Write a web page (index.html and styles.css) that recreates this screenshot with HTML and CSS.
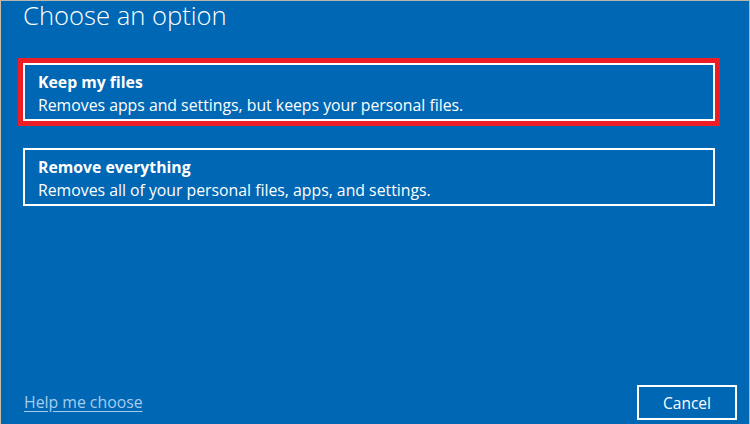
FILE: index.html
```html
<!DOCTYPE html>
<html lang="en">
<head>
<meta charset="utf-8">
<title>Choose an option</title>
<link rel="stylesheet" href="styles.css">
</head>
<body>
<div class="screen">
  <h1 class="title">Choose an option</h1>
  <div class="options">
    <div class="option option-selected">
      <div class="option-name">Keep my files</div>
      <div class="option-desc">Removes apps and settings, but keeps your personal files.</div>
    </div>
    <div class="option">
      <div class="option-name">Remove everything</div>
      <div class="option-desc">Removes all of your personal files, apps, and settings.</div>
    </div>
  </div>
  <div class="footer">
    <a class="help" href="#">Help me choose</a>
    <button class="cancel" type="button">Cancel</button>
  </div>
</div>
</body>
</html>
```

FILE: styles.css
```css
html, body {
  margin: 0;
  padding: 0;
  height: 100%;
}
body {
  background: #0067b4;
  font-family: "Open Sans", "Noto Sans", sans-serif;
  color: #ffffff;
  overflow: hidden;
}
.screen {
  box-sizing: border-box;
  width: 750px;
  height: 424px;
  display: flex;
  flex-direction: column;
  padding: 0 12px 4px 22px;
  border-left: 1px solid #c9bfa8;
  border-top: 1px solid #b9b4ac;
  border-right: 1px solid #9fbbd6;
}
.title {
  margin: 0;
  font-weight: 300;
  font-size: 25.6px;
  line-height: 30px;
}
.options {
  display: flex;
  flex-direction: column;
  gap: 27px;
  margin-top: 32px;
  width: 692px;
}
.option {
  box-sizing: border-box;
  height: 58px;
  border: 2px solid #ffffff;
  padding: 6px 13px 0 13px;
}
.option-selected {
  outline: 5px solid #ee1c25;
}
.option-name {
  font-weight: 700;
  font-size: 15.8px;
  line-height: 23px;
}
.option-desc {
  font-size: 15.8px;
  line-height: 23px;
}
.footer {
  margin-top: auto;
  display: flex;
  justify-content: space-between;
  align-items: flex-end;
}
.help {
  color: #a6cdf0;
  font-size: 15.8px;
  line-height: 20px;
  margin-bottom: 8px;
  margin-left: 1px;
  text-decoration: underline;
  text-underline-offset: 3px;
}
.cancel {
  box-sizing: border-box;
  width: 100px;
  height: 35px;
  background: transparent;
  border: 2px solid #ffffff;
  color: #ffffff;
  font-family: "Open Sans", "Noto Sans", sans-serif;
  font-size: 15.5px;
  padding: 0;
}
```
